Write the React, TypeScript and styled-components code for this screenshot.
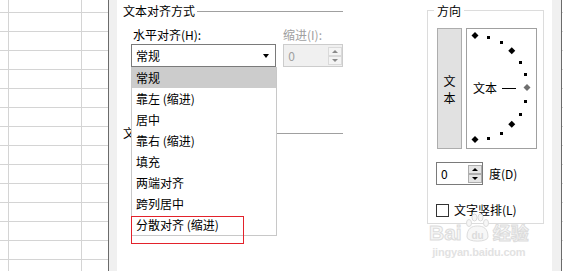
import React from "react";
import styled, { createGlobalStyle } from "styled-components";

const Global = createGlobalStyle`
  html, body { margin: 0; padding: 0; background: #fff; }
  #root { width: 563px; height: 271px; overflow: hidden; }
  * { box-sizing: border-box; }
`;

const FONT = `"Noto Sans CJK SC", "Microsoft YaHei", sans-serif`;

const Page = styled.div`
  display: flex;
  width: 563px;
  height: 271px;
  overflow: hidden;
  font-family: ${FONT};
  font-size: 12px;
  color: #000;
  background-color: #fff;
  background-image:
    linear-gradient(to right, transparent 8px, #d4d4d4 8px, #d4d4d4 9px, transparent 9px, transparent 81px, #d4d4d4 81px, #d4d4d4 82px, transparent 82px),
    linear-gradient(to bottom, #d4d4d4 1px, transparent 1px);
  background-size: 100% 100%, 100% 19px;
  background-position: 0 0, 0 12px;
  background-repeat: no-repeat, repeat;
`;

const SheetGap = styled.div<{ $w: number }>`
  flex: none;
  width: ${(p) => p.$w}px;
`;

const Dialog = styled.div`
  flex: none;
  width: 454px;
  height: 100%;
  display: flex;
  background: #f0f0f0;
  border-left: 1px solid #6b6b6b;
  border-right: 1px solid #6b6b6b;
  padding: 0 9px 0 8px;
`;

const Content = styled.div`
  flex: 1;
  position: relative;
  display: flex;
  align-items: flex-start;
  background: #fff;
  padding-left: 6px;
`;

const AlignSection = styled.div`
  width: 220px;
  display: flex;
  flex-direction: column;
`;

const SectionHeader = styled.div<{ $top: number }>`
  display: flex;
  align-items: center;
  height: 14px;
  margin-top: ${(p) => p.$top}px;
`;

const HeaderText = styled.span`
  white-space: nowrap;
  line-height: 14px;
`;

const HeaderLine = styled.div`
  flex: 1;
  height: 1px;
  background: #a0a0a0;
  margin-left: 2px;
`;

const Indent = styled.div`
  padding-left: 8px;
  display: flex;
  flex-direction: column;
`;

const LabelRow = styled.div`
  display: flex;
  height: 14px;
  line-height: 14px;
  margin-top: 10px;
`;

const Label = styled.span<{ $w?: number; $pl?: number; $disabled?: boolean }>`
  ${(p) => (p.$w ? `width: ${p.$w}px;` : "")}
  padding-left: ${(p) => p.$pl ?? 0}px;
  color: ${(p) => (p.$disabled ? "#a0a0a0" : "#000")};
  white-space: nowrap;
`;

const ControlRow = styled.div`
  display: flex;
  gap: 7px;
  margin-top: 2px;
`;

const Combo = styled.div`
  width: 146px;
  height: 23px;
  border: 1px solid #7a7a7a;
  background: #fff;
  display: flex;
  align-items: center;
  justify-content: space-between;
  padding: 0 6px 0 4px;
`;

const DownArrow = styled.div`
  width: 0;
  height: 0;
  border-left: 3.5px solid transparent;
  border-right: 3.5px solid transparent;
  border-top: 4px solid #000;
`;

const SpinBox = styled.div<{ $w: number; $disabled?: boolean }>`
  width: ${(p) => p.$w}px;
  height: 23px;
  border: 1px solid ${(p) => (p.$disabled ? "#cccccc" : "#7a7a7a")};
  background: ${(p) => (p.$disabled ? "#f0f0f0" : "#fff")};
  color: ${(p) => (p.$disabled ? "#a0a0a0" : "#000")};
  display: flex;
  align-items: center;
  padding-left: 4px;
`;

const SpinValue = styled.span`
  flex: 1;
  line-height: 14px;
`;

const SpinCol = styled.div`
  align-self: stretch;
  display: flex;
  flex-direction: column;
  justify-content: center;
  padding: 1px 0;
`;

const SpinBtn = styled.div<{ $disabled?: boolean }>`
  width: 14px;
  height: 9px;
  border: 1px solid ${(p) => (p.$disabled ? "#dadada" : "#adadad")};
  background: ${(p) => (p.$disabled ? "#f4f4f4" : "#e5e5e5")};
  display: flex;
  align-items: center;
  justify-content: center;
`;

const Tri = styled.div<{ $up?: boolean; $disabled?: boolean }>`
  width: 0;
  height: 0;
  border-left: 3px solid transparent;
  border-right: 3px solid transparent;
  ${(p) =>
    p.$up
      ? `border-bottom: 3px solid ${p.$disabled ? "#8a8a8a" : "#000"};`
      : `border-top: 3px solid ${p.$disabled ? "#8a8a8a" : "#000"};`}
`;

const DropList = styled.div`
  position: absolute;
  left: 14px;
  top: 67px;
  width: 146px;
  border: 1px solid #c8c8c8;
  border-top: none;
  background: #fff;
  z-index: 2;
`;

const DropItem = styled.div<{ $active?: boolean }>`
  height: 21px;
  line-height: 21px;
  padding-left: 4px;
  white-space: nowrap;
  background: ${(p) => (p.$active ? "#cccccc" : "transparent")};
`;

const RedMark = styled.div`
  position: absolute;
  left: 14px;
  top: 216px;
  width: 113px;
  height: 28px;
  border: 1px solid #e3222b;
  z-index: 3;
`;

const DirGroup = styled.div`
  width: 117px;
  height: 214px;
  margin-top: 10px;
  margin-left: 84px;
  border: 1px solid #dcdcdc;
  padding: 0 6px 0 9px;
  display: flex;
  flex-direction: column;
`;

const Legend = styled.span`
  align-self: flex-start;
  margin-top: -7px;
  margin-left: -3px;
  padding: 0 3px;
  line-height: 14px;
  background: #fff;
`;

const OrientRow = styled.div`
  display: flex;
  gap: 4px;
  margin-top: 10px;
`;

const VertButton = styled.div`
  width: 25px;
  height: 121px;
  background: #e1e1e1;
  border: 1px solid #adadad;
  display: flex;
  flex-direction: column;
  align-items: center;
  justify-content: center;
  line-height: 17px;
`;

const Dial = styled.div`
  width: 71px;
  height: 121px;
  border: 1px solid #a0a0a0;
  background: #fff;
  position: relative;
`;

const DialLabel = styled.div`
  position: absolute;
  left: 6px;
  top: 52px;
  display: flex;
  align-items: center;
  line-height: 14px;
  white-space: nowrap;
`;

const DialLine = styled.div`
  width: 14px;
  height: 1px;
  background: #000;
  margin-left: 5px;
`;

const DegreeRow = styled.div`
  display: flex;
  align-items: center;
  gap: 6px;
  margin-top: 13px;
  margin-left: -1px;
`;

const CheckRow = styled.div`
  display: flex;
  align-items: center;
  gap: 5px;
  margin-top: 18px;
  margin-left: -1px;
  line-height: 14px;
`;

const CheckBox = styled.div`
  width: 13px;
  height: 13px;
  border: 1px solid #333;
  background: #fff;
`;

const Watermark = styled.div`
  position: absolute;
  left: 312px;
  top: 213px;
  display: flex;
  flex-direction: column;
  align-items: center;
  pointer-events: none;
  z-index: 1;
`;

const WmRow = styled.div`
  display: flex;
  align-items: flex-end;
  gap: 2px;
`;

const WmText = styled.span<{ $size: number }>`
  font-family: "Liberation Sans", "Noto Sans CJK SC", sans-serif;
  font-weight: bold;
  font-size: ${(p) => p.$size}px;
  line-height: 1;
  color: #f7f7f7;
  -webkit-text-stroke: 1px #dcdcdc;
`;

const WmUrl = styled.span`
  font-family: "Liberation Sans", sans-serif;
  font-weight: bold;
  font-size: 11px;
  line-height: 13px;
  color: #e2e2e2;
  margin-top: 3px;
  letter-spacing: -0.2px;
`;

const items = ["常规", "靠左 (缩进)", "居中", "靠右 (缩进)", "填充", "两端对齐", "跨列居中", "分散对齐 (缩进)"];

function DialDots() {
  const cx = 8;
  const cy = 58.5;
  const r = 52;
  const marks: React.ReactElement[] = [];
  for (let a = 90; a >= -90; a -= 15) {
    const rad = (a * Math.PI) / 180;
    const x = cx + r * Math.cos(rad);
    const y = cy - r * Math.sin(rad);
    if (a % 45 === 0) {
      const h = 3.5;
      marks.push(
        <polygon
          key={a}
          points={`${x},${y - h} ${x + h},${y} ${x},${y + h} ${x - h},${y}`}
          fill={a === 0 ? "#6f6f6f" : "#000"}
        />
      );
    } else {
      marks.push(<rect key={a} x={Math.round(x) - 1} y={Math.round(y) - 1} width={3} height={3} fill="#000" />);
    }
  }
  return (
    <svg width="69" height="119" viewBox="0 0 69 119" style={{ display: "block" }}>
      {marks}
    </svg>
  );
}

function SpinButtons({ disabled }: { disabled?: boolean }) {
  return (
    <SpinCol>
      <SpinBtn $disabled={disabled}>
        <Tri $up $disabled={disabled} />
      </SpinBtn>
      <SpinBtn $disabled={disabled}>
        <Tri $disabled={disabled} />
      </SpinBtn>
    </SpinCol>
  );
}

export default function App() {
  return (
    <>
      <Global />
      <Page>
        <SheetGap $w={108} />
        <Dialog>
          <Content>
            <AlignSection>
              <SectionHeader $top={4}>
                <HeaderText>文本对齐方式</HeaderText>
                <HeaderLine />
              </SectionHeader>
              <Indent>
                <LabelRow>
                  <Label $w={152} $pl={2}>水平对齐(H):</Label>
                  <Label $disabled>缩进(I):</Label>
                </LabelRow>
                <ControlRow>
                  <Combo>
                    <span>常规</span>
                    <DownArrow />
                  </Combo>
                  <SpinBox $w={60} $disabled>
                    <SpinValue>0</SpinValue>
                    <SpinButtons disabled />
                  </SpinBox>
                </ControlRow>
              </Indent>
              <SectionHeader $top={59}>
                <HeaderText>文本控制</HeaderText>
                <HeaderLine />
              </SectionHeader>
            </AlignSection>

            <DirGroup>
              <Legend>方向</Legend>
              <OrientRow>
                <VertButton>
                  <span>文</span>
                  <span>本</span>
                </VertButton>
                <Dial>
                  <DialDots />
                  <DialLabel>
                    <span>文本</span>
                    <DialLine />
                  </DialLabel>
                </Dial>
              </OrientRow>
              <DegreeRow>
                <SpinBox $w={47}>
                  <SpinValue>0</SpinValue>
                  <SpinButtons />
                </SpinBox>
                <span>度(D)</span>
              </DegreeRow>
              <CheckRow>
                <CheckBox />
                <span>文字竖排(L)</span>
              </CheckRow>
            </DirGroup>

            <DropList>
              {items.map((t, i) => (
                <DropItem key={t} $active={i === 0}>
                  {t}
                </DropItem>
              ))}
            </DropList>
            <RedMark />

            <Watermark>
              <WmRow>
                <WmText $size={21}>Bai</WmText>
                <svg width="27" height="30" viewBox="0 0 27 30">
                  <ellipse cx="5" cy="10" rx="2.5" ry="3.5" fill="#f7f7f7" stroke="#dcdcdc" />
                  <ellipse cx="10.5" cy="4.5" rx="2.5" ry="3.5" fill="#f7f7f7" stroke="#dcdcdc" />
                  <ellipse cx="16.5" cy="4.5" rx="2.5" ry="3.5" fill="#f7f7f7" stroke="#dcdcdc" />
                  <ellipse cx="22" cy="10" rx="2.5" ry="3.5" fill="#f7f7f7" stroke="#dcdcdc" />
                  <path d="M3 24 C3 15 8 13 13.5 13 C19 13 24 15 24 24 C24 29.5 3 29.5 3 24 Z" fill="#f7f7f7" stroke="#dcdcdc" />
                  <text x="13.5" y="26" fontSize="10" fontWeight="bold" textAnchor="middle" fill="#dcdcdc" fontFamily="Liberation Sans, sans-serif">du</text>
                </svg>
                <WmText $size={18}>经验</WmText>
              </WmRow>
              <WmUrl>jingyan.baidu.com</WmUrl>
            </Watermark>
          </Content>
        </Dialog>
        <SheetGap $w={1} />
      </Page>
    </>
  );
}
